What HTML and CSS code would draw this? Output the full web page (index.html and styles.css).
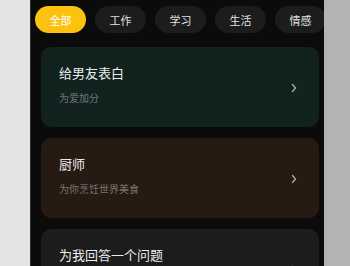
FILE: index.html
```html
<!DOCTYPE html>
<html lang="zh">
<head>
<meta charset="utf-8">
<link rel="stylesheet" href="styles.css">
</head>
<body>
<div class="side-left"></div>
<main class="panel">
  <nav class="chips">
    <span class="chip active">全部</span>
    <span class="chip">工作</span>
    <span class="chip">学习</span>
    <span class="chip">生活</span>
    <span class="chip">情感</span>
  </nav>
  <section class="cards">
    <div class="card green">
      <div class="text">
        <div class="title">给男友表白</div>
        <div class="sub">为爱加分</div>
      </div>
      <svg class="chev" width="6" height="10" viewBox="0 0 6 10"><polyline points="1.5,1.5 4.5,5 1.5,8.5" fill="none" stroke="currentColor" stroke-width="1.3" stroke-linecap="round" stroke-linejoin="round"/></svg>
    </div>
    <div class="card brown">
      <div class="text">
        <div class="title">厨师</div>
        <div class="sub">为你烹饪世界美食</div>
      </div>
      <svg class="chev" width="6" height="10" viewBox="0 0 6 10"><polyline points="1.5,1.5 4.5,5 1.5,8.5" fill="none" stroke="currentColor" stroke-width="1.3" stroke-linecap="round" stroke-linejoin="round"/></svg>
    </div>
    <div class="card gray">
      <div class="text">
        <div class="title">为我回答一个问题</div>
        <div class="sub">解答你的疑惑</div>
      </div>
      <svg class="chev" width="6" height="10" viewBox="0 0 6 10"><polyline points="1.5,1.5 4.5,5 1.5,8.5" fill="none" stroke="currentColor" stroke-width="1.3" stroke-linecap="round" stroke-linejoin="round"/></svg>
    </div>
  </section>
</main>
<div class="side-right"></div>
</body>
</html>
```

FILE: styles.css
```css
html, body {
  margin: 0;
  padding: 0;
  height: 266px;
  overflow: hidden;
}
body {
  display: flex;
  font-family: "Noto Sans CJK SC", "Noto Sans", sans-serif;
  background: #b3b3b3;
}
.side-left {
  width: 30px;
  flex: none;
  background: #e4e4e4;
}
.side-right {
  flex: 1;
  background: #b3b3b3;
}
.panel {
  width: 294px;
  flex: none;
  background: #0b0b0b;
  box-shadow: inset 1px 0 0 #2c2c2c;
  overflow: hidden;
  padding-top: 6px;
  box-sizing: border-box;
}
.chips {
  display: flex;
  gap: 9px;
  padding-left: 5px;
  white-space: nowrap;
}
.chip {
  flex: none;
  width: 51px;
  height: 27px;
  border-radius: 14px;
  background: #1c1c1c;
  color: #e2e2e2;
  font-size: 11px;
  display: flex;
  align-items: center;
  justify-content: center;
}
.chip.active {
  background: #fdc10f;
  color: #ffffff;
}
.cards {
  display: flex;
  flex-direction: column;
  gap: 11px;
  margin: 14px 5px 0 11px;
}
.card {
  height: 80px;
  border-radius: 10px;
  box-sizing: border-box;
  padding: 16px 22px 0 18px;
  display: flex;
  justify-content: space-between;
}
.card.green { background: #12221f; }
.card.brown { background: #261a13; }
.card.gray { background: #1c1c1c; }
.title {
  font-size: 13px;
  line-height: 20px;
  color: #ececec;
}
.sub {
  margin-top: 7px;
  font-size: 10px;
  line-height: 16px;
  color: rgba(255, 255, 255, 0.4);
}
.chev {
  align-self: center;
  margin-top: -14px;
  color: #a7aeac;
}
.brown .chev { color: #b3aaa4; }
```
